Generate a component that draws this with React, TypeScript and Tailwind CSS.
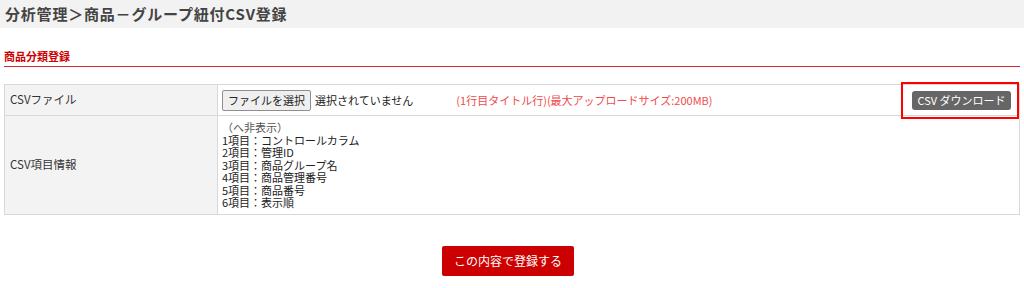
import React from "react";

const font = { fontFamily: '"Noto Sans CJK JP", "Noto Sans", sans-serif' };

export default function App() {
  const items = [
    "1項目：コントロールカラム",
    "2項目：管理ID",
    "3項目：商品グループ名",
    "4項目：商品管理番号",
    "5項目：商品番号",
    "6項目：表示順",
  ];
  return (
    <div style={font} className="w-[1024px] h-[288px] bg-white text-[#333]">
      <div className="h-[28px] bg-[#f2f2f2] flex items-center pl-[5px] text-[15px] tracking-[0.8px] font-bold text-[#444]">
        分析管理＞商品－グループ紐付CSV登録
      </div>
      <div className="px-[4px]">
        <div className="mt-[19px] h-[20px] border-b border-[#d52b2b] flex items-start">
          <span className="text-[11px] font-bold text-[#cc0000] leading-[14px] mt-[2px]">商品分類登録</span>
        </div>
        <table className="mt-[17px] w-[1016px] border-collapse text-[11.5px]">
          <tbody>
            <tr className="h-[31px]">
              <td className="w-[213px] bg-[#f3f3f3] border border-[#d8d8d8] pl-[5px] align-middle">CSVファイル</td>
              <td className="border border-[#d8d8d8] pl-[4px] pr-[8px] align-middle">
                <div className="flex items-center">
                  <span className="h-[21px] px-[5px] border border-[#8f8f8f] rounded-[2px] bg-[#efefef] flex items-center text-[11px] text-[#222]">
                    ファイルを選択
                  </span>
                  <span className="ml-[4px] text-[11px] text-[#222]">選択されていません</span>
                  <span className="ml-[43px] text-[11px] text-[#f04a4a]">(1行目タイトル行)(最大アップロードサイズ:200MB)</span>
                  <div className="ml-auto relative">
                    <span className="h-[19px] w-[99px] justify-center rounded-[3px] bg-[#666] text-white text-[11px] flex items-center">
                      CSV ダウンロード
                    </span>
                    <div className="absolute left-[-11px] right-[-8px] top-[-9px] bottom-[-9px] border-2 border-[#ff0000]" />
                  </div>
                </div>
              </td>
            </tr>
            <tr className="h-[99px]">
              <td className="bg-[#f3f3f3] border border-[#d8d8d8] pl-[5px] align-middle">CSV項目情報</td>
              <td className="border border-[#d8d8d8] pl-[4px] align-top pt-[5px]">
                <div className="text-[11px] leading-[12.5px] text-[#222]">
                  <div className="text-[#555]">（へ非表示）</div>
                  {items.map((t) => (
                    <div key={t}>{t}</div>
                  ))}
                </div>
              </td>
            </tr>
          </tbody>
        </table>
        <div className="flex justify-center mt-[31px]">
          <button className="w-[132px] h-[30px] bg-[#cc0000] rounded-[2px] text-white text-[12px] ml-[-8px]">
            この内容で登録する
          </button>
        </div>
      </div>
    </div>
  );
}
